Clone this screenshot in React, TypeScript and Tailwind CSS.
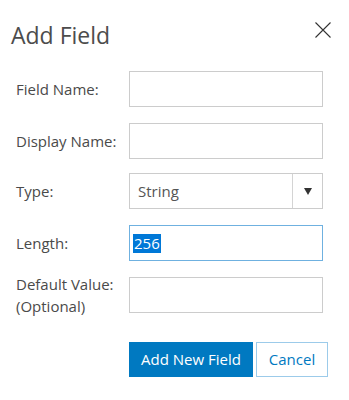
import React from "react";

function Row({ label, children, className = "" }: { label: React.ReactNode; children: React.ReactNode; className?: string }) {
  return (
    <div className={"flex items-center h-[36px] " + className}>
      <div className="w-[113px] text-[15px] leading-[22px] text-[#4a4a4a]">{label}</div>
      {children}
    </div>
  );
}

const boxCls = "w-[194px] h-[36px] border border-[#cccccc] bg-white";

export default function App() {
  return (
    <div className="w-[349px] h-[400px] bg-white font-['Open_Sans',sans-serif] text-[#4c4c4c]">
      <div className="flex items-start justify-between pl-[11px] pr-[18px] pt-[21px]">
        <h1 className="text-[23px] leading-[28px] text-[#4c4c4c]">Add Field</h1>
        <svg width="16" height="16" viewBox="0 0 16 16" className="mt-[1px]">
          <path d="M0.5 0.5 L15.5 15.5 M15.5 0.5 L0.5 15.5" stroke="#333" strokeWidth="1.1" fill="none" />
        </svg>
      </div>
      <div className="mt-[22px] flex flex-col gap-[16px] pl-[16px]">
        <Row label="Field Name:">
          <div className={boxCls} />
        </Row>
        <Row label="Display Name:">
          <div className={boxCls} />
        </Row>
        <Row label="Type:" className="mt-[-2px]">
          <div className={boxCls + " flex items-stretch"}>
            <div className="flex-1 flex items-center pl-[8px] text-[15px] text-[#555]">String</div>
            <div className="w-[30px] border-l border-[#d4d4d4] flex items-center justify-center">
              <svg width="8" height="7" viewBox="0 0 8 7">
                <path d="M0 0 L8 0 L4 7 Z" fill="#333" />
              </svg>
            </div>
          </div>
        </Row>
        <Row label="Length:">
          <div className="w-[194px] h-[36px] border border-[#6fb1e0] bg-white flex items-center pl-[3px]">
            <span className="bg-[#0078d7] text-white text-[15px] leading-[19px] px-[1px]">256</span>
          </div>
        </Row>
        <Row
          label={
            <>
              Default Value:
              <br />
              (Optional)
            </>
          }
        >
          <div className={boxCls} />
        </Row>
      </div>
      <div className="ml-[129px] mt-[29px] flex gap-[3px]">
        <button className="w-[124px] h-[35px] bg-[#0079c1] text-white text-[15px] border border-[#0079c1]">
          Add New Field
        </button>
        <button className="w-[72px] h-[35px] bg-white text-[#0079c1] text-[15px] border border-[#9ccbea]">
          Cancel
        </button>
      </div>
    </div>
  );
}
